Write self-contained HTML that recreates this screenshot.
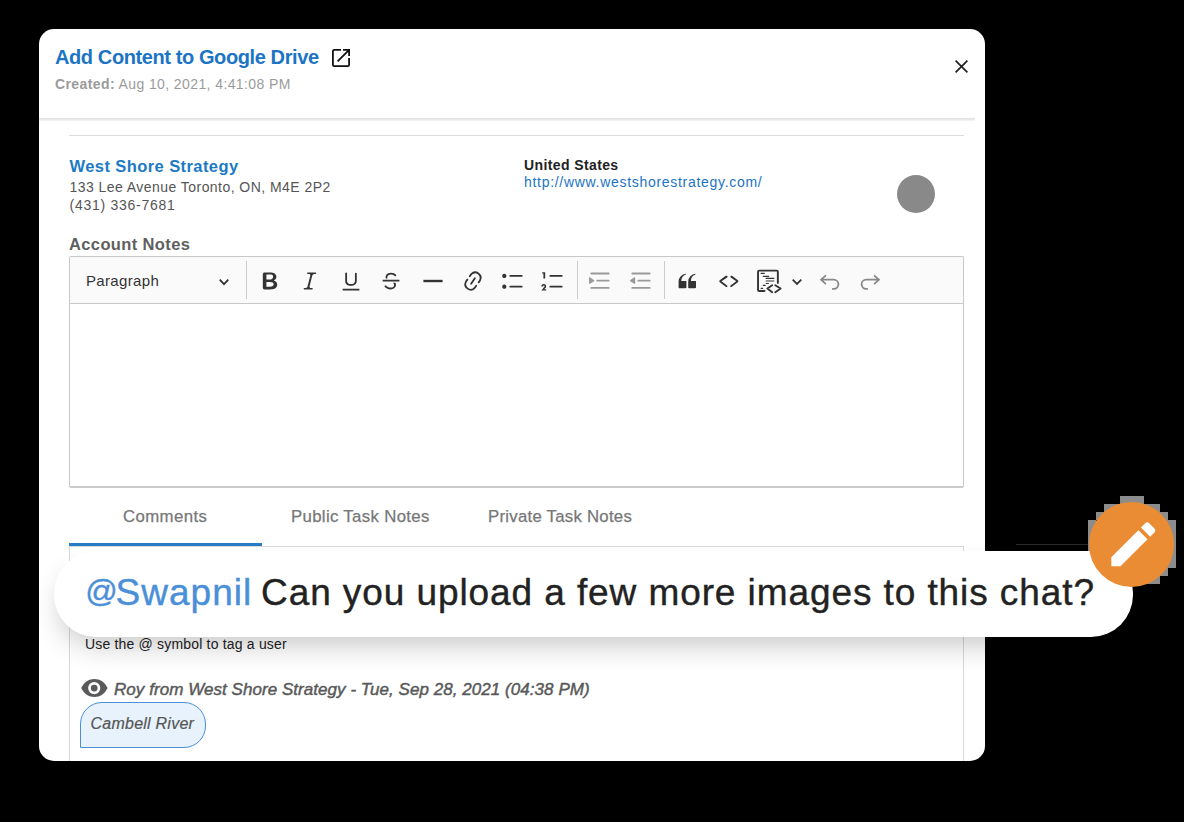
<!DOCTYPE html>
<html><head><meta charset="utf-8">
<style>
*{margin:0;padding:0;box-sizing:border-box}
html,body{width:1184px;height:822px;overflow:hidden;background:#000}
body{font-family:"Liberation Sans",sans-serif;position:relative}
.t{position:absolute;white-space:nowrap;line-height:1}
.a{position:absolute}
#modal{position:absolute;left:0;top:0;width:1184px;height:822px;background:#fff;clip-path:inset(29px 199px 61px 39px round 15px)}
svg{position:absolute;overflow:visible}
</style></head><body>
<div id="modal">
  <div class="t" style="left:55px;top:47.1px;font-size:20px;font-weight:bold;color:#1c74c5;letter-spacing:-0.4px">Add Content to Google Drive</div>
  <svg style="left:331px;top:48px" width="20" height="20" viewBox="0 0 20 20" fill="none" stroke="#111" stroke-width="1.8">
    <path d="M10 1.9H3.2Q1.9 1.9 1.9 3.2V16.8Q1.9 18.1 3.2 18.1H16.8Q18.1 18.1 18.1 16.8V10"/>
    <path d="M12 1.9H18.1V8M18.1 1.9L6.6 13.4"/>
  </svg>
  <div class="t" style="left:55px;top:77.15px;font-size:14px;color:#9b9b9b;letter-spacing:0.4px"><b>Created:</b> Aug 10, 2021, 4:41:08 PM</div>
  <svg style="left:955px;top:59.8px" width="13" height="13" viewBox="0 0 13 13" stroke="#222" stroke-width="1.7"><path d="M0.6 0.6L12.4 12.4M12.4 0.6L0.6 12.4"/></svg>
  <div class="a" style="left:39px;top:118px;width:936px;height:3px;background:linear-gradient(#e3e3e3,#e6e6e6 40%,#f6f6f6)"></div>
  <div class="a" style="left:69px;top:135px;width:895px;height:1px;background:#dcdcdc"></div>

  <div class="t" style="left:69.5px;top:157.8px;font-size:16.5px;font-weight:bold;color:#1c7ac4;letter-spacing:0.42px">West Shore Strategy</div>
  <div class="t" style="left:69.5px;top:179.65px;font-size:14px;color:#555;letter-spacing:0.45px">133 Lee Avenue Toronto, ON, M4E 2P2</div>
  <div class="t" style="left:69.5px;top:198.45px;font-size:14px;color:#555;letter-spacing:0.73px">(431) 336-7681</div>
  <div class="t" style="left:524px;top:157.65px;font-size:14px;font-weight:bold;color:#222;letter-spacing:0.39px">United States</div>
  <div class="t" style="left:524px;top:175.45px;font-size:14px;color:#1c74c5;letter-spacing:0.7px">http://www.westshorestrategy.com/</div>
  <div class="a" style="left:897px;top:174.5px;width:38px;height:38px;border-radius:50%;background:#898989"></div>

  <div class="t" style="left:69px;top:236.4px;font-size:16.5px;font-weight:bold;color:#5f5f5f;letter-spacing:0.37px">Account Notes</div>

  <!-- editor -->
  <div class="a" style="left:69px;top:255.5px;width:895px;height:232px;border:1px solid #c8c8c8;border-bottom:2px solid #cacaca;border-radius:2px;background:#fff"></div>
  <div class="a" style="left:70px;top:257px;width:893px;height:47px;background:#fafafa;border-bottom:1px solid #c8c8c8"></div>
  <div class="t" style="left:86px;top:272.6px;font-size:15px;color:#333;letter-spacing:0.34px">Paragraph</div>
  <svg style="left:219px;top:279px" width="10" height="6.4" viewBox="0 0 10 6.4" fill="none" stroke="#333" stroke-width="1.8"><path d="M0.7 0.7L5 5.2L9.3 0.7"/></svg>
  <div class="a" style="left:246px;top:261px;width:1px;height:38px;background:#ccc"></div>
  <div class="a" style="left:577px;top:261px;width:1px;height:38px;background:#ccc"></div>
  <div class="a" style="left:663.5px;top:261px;width:1px;height:38px;background:#ccc"></div>


  <!-- tabs -->
  <div class="t" style="left:123px;top:508.7px;font-size:16.8px;color:#777;letter-spacing:0.39px;-webkit-text-stroke:0.25px #777">Comments</div>
  <div class="t" style="left:291px;top:508.9px;font-size:16.8px;color:#777;letter-spacing:0.33px;-webkit-text-stroke:0.25px #777">Public Task Notes</div>
  <div class="t" style="left:488px;top:508.9px;font-size:16.8px;color:#777;letter-spacing:0.25px;-webkit-text-stroke:0.25px #777">Private Task Notes</div>
  <div class="a" style="left:69px;top:545.5px;width:895px;height:1.2px;background:#dadada"></div>
  <div class="a" style="left:69px;top:543px;width:193px;height:3px;background:#2a7bc6"></div>
  <div class="a" style="left:69px;top:546px;width:895px;height:260px;border-left:1px solid #d8d8d8;border-right:1px solid #d8d8d8"></div>
  <div class="t" style="left:85px;top:636.75px;font-size:14px;color:#222;letter-spacing:0.185px">Use the @ symbol to tag a user</div>
  <svg style="left:81px;top:678.7px" width="27" height="18" viewBox="0 0 27 18">
    <path fill="#5a5a5a" d="M0.2 9C3.2 3 7.8 0 13.4 0S23.6 3 26.6 9C23.6 15 19 18 13.4 18S3.2 15 0.2 9z"/>
    <circle cx="13.2" cy="9.1" r="6.1" fill="#fff"/>
    <circle cx="13.2" cy="9.1" r="3.4" fill="#5a5a5a"/>
  </svg>
  <div class="t" style="left:114px;top:680.5px;font-size:17px;font-style:italic;color:#595959;letter-spacing:0.05px;-webkit-text-stroke:0.45px #595959">Roy from West Shore Strategy - Tue, Sep 28, 2021 (04:38 PM)</div>
  <div class="a" style="left:80px;top:702px;width:126px;height:45.5px;background:#e7f2fc;border:1px solid #4a8fd8;border-radius:22px 22px 22px 0"></div>
  <div class="t" style="left:90.5px;top:716.1px;font-size:16px;font-style:italic;color:#555;letter-spacing:0.24px;-webkit-text-stroke:0.2px #555">Cambell River</div>
  <!-- toolbar icons (20 viewBox scaled to 24px) -->
  <svg style="left:257.9px;top:268.9px" width="24" height="24" viewBox="0 0 20 20" fill="#333"><path d="M10.187 17H5.773c-.637 0-1.092-.138-1.364-.415-.273-.277-.409-.718-.409-1.323V4.738c0-.617.14-1.062.419-1.332.279-.27.73-.406 1.354-.406h4.68c.69 0 1.288.041 1.793.124.506.083.96.242 1.36.478.341.197.644.447.906.75a3.262 3.262 0 0 1 .808 2.162c0 1.401-.722 2.426-2.167 3.075C15.05 10.175 16 11.315 16 13.01a3.756 3.756 0 0 1-2.296 3.504 6.1 6.1 0 0 1-1.517.377c-.571.073-1.238.11-2 .11zm-.217-6.217H7v4.087h3.069c1.977 0 2.965-.69 2.965-2.072 0-.707-.256-1.22-.768-1.537-.512-.319-1.277-.478-2.296-.478zM7 5.13v3.619h2.606c.709 0 1.258-.066 1.648-.198a1.65 1.65 0 0 0 .886-.759c.303-.48.455-.86.455-1.34 0-.79-.281-1.315-.845-1.576-.369-.171-1.082-.252-2.084-.252H7z"/></svg>

  <svg style="left:297.9px;top:268.9px" width="24" height="24" viewBox="0 0 20 20" fill="#333"><path d="m9.586 14.633.021.004c-.036.335.095.655.393.962.082.083.173.15.274.201h1.474a.6.6 0 1 1 0 1.2H5.304a.6.6 0 0 1 0-1.2h1.15c.474-.07.809-.182 1.005-.334.157-.122.291-.32.404-.597l2.416-9.55a1.053 1.053 0 0 0-.281-.823 1.12 1.12 0 0 0-.442-.296H8.15a.6.6 0 0 1 0-1.2h6.443a.6.6 0 1 1 0 1.2h-1.195c-.376.056-.65.155-.823.296-.215.175-.423.439-.623.79l-2.366 9.347z"/></svg>
  <svg style="left:338.6px;top:268.9px" width="24" height="24" viewBox="0 0 20 20" fill="#333"><path d="M3 18v-1.5h14V18zm2.2-8V3.6c0-.4.4-.6.8-.6.3 0 .7.2.7.6v6.2c0 2 1.3 2.8 3.2 2.8 1.9 0 3.4-.9 3.4-2.9V3.6c0-.3.4-.5.8-.5.3 0 .7.2.7.5V10c0 2.7-2.2 4-4.9 4-2.6 0-4.7-1.2-4.7-4z"/></svg>
  <svg style="left:379.4px;top:268.9px" width="24" height="24" viewBox="0 0 20 20" fill="#333"><path d="M7 16.4c-.8-.4-1.5-.9-2.2-1.5a.6.6 0 0 1-.2-.5l.3-.6h1c1 1.2 2.1 1.7 3.7 1.7 1 0 1.8-.3 2.3-.6.6-.4.6-1.2.6-1.3.2-1.2-.9-2.1-.9-2.1h2.1c.3.7.4 1.2.4 1.7v.8l-.6 1.2c-.6.8-1.1 1-1.6 1.2a6 6 0 0 1-2.4.6c-1 0-1.8-.3-2.5-.6zM6.8 9 6 8.3c-.4-.5-.5-.8-.5-1.6 0-.7.1-1.3.5-1.8.4-.6 1-1 1.6-1.3a6.3 6.3 0 0 1 4.7 0 4 4 0 0 1 1.7 1l.3.7c0 .1.2.4-.2.7-.4.2-.9.1-1 0a3 3 0 0 0-1.2-1c-.4-.2-1-.3-2-.4-.7 0-1.4.2-2 .6-.8.6-1 1.5-1 2s.3.6.4.8h-1.5zM3 10.5V9h14v1.5z"/></svg>
  <svg style="left:420.5px;top:268.9px" width="24" height="24" viewBox="0 0 20 20" fill="#333"><path d="M2 9h16v2H2z"/></svg>
  <svg style="left:461.3px;top:268.9px" width="24" height="24" viewBox="0 0 20 20" fill="#333"><path d="m11.077 15 .991-1.416a.75.75 0 1 1 1.229.86l-1.148 1.64a.748.748 0 0 1-.217.206 5.251 5.251 0 0 1-8.503-5.955.741.741 0 0 1 .12-.274l1.147-1.639a.75.75 0 1 1 1.228.86L4.933 10.7l.006.003a3.75 3.75 0 0 0 6.132 4.294l.006.004zm5.494-5.335a.748.748 0 0 1-.12.274l-1.147 1.639a.75.75 0 1 1-1.228-.86l.86-1.23a3.75 3.75 0 0 0-6.144-4.301l-.86 1.229a.75.75 0 0 1-1.229-.86l1.148-1.64a.748.748 0 0 1 .217-.206 5.251 5.251 0 0 1 8.503 5.955zm-4.563-2.532a.75.75 0 0 1 .184 1.045l-3.155 4.505a.75.75 0 1 1-1.229-.86l3.155-4.506a.75.75 0 0 1 1.045-.184z"/></svg>
  <svg style="left:501px;top:268.9px" width="24" height="24" viewBox="0 0 20 20" fill="#333"><path d="M7 5.75c0 .414.336.75.75.75h9.5a.75.75 0 1 0 0-1.5h-9.5a.75.75 0 0 0-.75.75zm-6 0C1 4.784 1.777 4 2.75 4c.966 0 1.75.777 1.75 1.75 0 .966-.777 1.75-1.75 1.75C1.784 7.5 1 6.723 1 5.75zm6 9c0 .414.336.75.75.75h9.5a.75.75 0 1 0 0-1.5h-9.5a.75.75 0 0 0-.75.75zm-6 0c0-.966.777-1.75 1.75-1.75.966 0 1.75.777 1.75 1.75 0 .966-.777 1.75-1.75 1.75-.966 0-1.75-.777-1.75-1.75z"/></svg>
  <svg style="left:541.4px;top:268.9px" width="24" height="24" viewBox="0 0 20 20" fill="#333"><path d="M7 5.75c0 .414.336.75.75.75h9.5a.75.75 0 1 0 0-1.5h-9.5a.75.75 0 0 0-.75.75zM3.5 3v5H2V3.7H1v-1h2.5V3zM.343 17.857l2.59-3.257H2.92a.6.6 0 1 0-1.04 0H.302a2 2 0 1 1 3.995 0h-.001c-.048.405-.16.734-.333.988-.175.254-.59.692-1.244 1.312H4.3v1h-4l.043-.043zM7 14.75a.75.75 0 0 1 .75-.75h9.5a.75.75 0 1 1 0 1.5h-9.5a.75.75 0 0 1-.75-.75z"/></svg>
  <svg style="left:588.3px;top:269.3px" width="24" height="24" viewBox="0 0 20 20" fill="#999"><path d="M2 3.75c0 .414.336.75.75.75h14.5a.75.75 0 1 0 0-1.5H2.75a.75.75 0 0 0-.75.75zm5 6c0 .414.336.75.75.75h9.5a.75.75 0 1 0 0-1.5h-9.5a.75.75 0 0 0-.75.75zM2.75 16.5h14.5a.75.75 0 1 0 0-1.5H2.75a.75.75 0 1 0 0 1.5zM1.632 6.95 5.02 9.358a.5.5 0 0 1-.013.822L1.62 12.357a.5.5 0 0 1-.77-.42V7.358a.5.5 0 0 1 .782-.409z"/></svg>
  <svg style="left:629.3px;top:269.3px" width="24" height="24" viewBox="0 0 20 20" fill="#999"><path d="M2 3.75c0 .414.336.75.75.75h14.5a.75.75 0 1 0 0-1.5H2.75a.75.75 0 0 0-.75.75zm5 6c0 .414.336.75.75.75h9.5a.75.75 0 1 0 0-1.5h-9.5a.75.75 0 0 0-.75.75zM2.75 16.5h14.5a.75.75 0 1 0 0-1.5H2.75a.75.75 0 1 0 0 1.5zm1.618-9.55L.98 9.358a.5.5 0 0 0 .013.822l3.386 2.177a.5.5 0 0 0 .77-.42V7.358a.5.5 0 0 0-.782-.409z"/></svg>
  <svg style="left:675.3px;top:268.9px" width="24" height="24" viewBox="0 0 20 20" fill="#333"><path d="M3 10.423a6.5 6.5 0 0 1 6.056-6.408l.038.67C6.448 5.423 5.354 7.663 5.22 10H9c.552 0 .5.432.5.986v4.511c0 .554-.448.503-1 .503h-5c-.552 0-.5-.449-.5-1.003v-4.574zm8 0a6.5 6.5 0 0 1 6.056-6.408l.038.67c-2.646.739-3.74 2.979-3.873 5.315H17c.552 0 .5.432.5.986v4.511c0 .554-.448.503-1 .503h-5c-.552 0-.5-.449-.5-1.003v-4.574z"/></svg>
  <svg style="left:716.6px;top:268.9px" width="24" height="24" viewBox="0 0 20 20" fill="#333"><path d="m12.5 5.7 5.2 3.9v1.3l-5.6 4c-.1.2-.3.2-.5.2-.4-.1-.6-.7-.6-1l.3-.4 4.7-3.5L11.5 7l-.2-.2c-.1-.3-.1-.6 0-.8.2-.4.8-.5 1.2-.3zm-5.2 0L2 9.6v1.3l5.6 4c.1.2.3.2.5.2.4-.1.6-.7.6-1l-.3-.4L3.8 10.2 8.5 7l.2-.2c.1-.3.1-.6 0-.8-.2-.4-.8-.5-1.2-.3z"/></svg>
  <svg style="left:752px;top:264.5px" width="36" height="32" viewBox="0 0 36 32" fill="none" stroke="#333" stroke-linecap="round" stroke-linejoin="round">
    <path stroke-width="1.9" d="M12.5 26.05H7.2Q6.05 26.05 6.05 24.9V6.8Q6.05 5.65 7.2 5.65H24.7Q25.85 5.65 25.85 6.8V17.9"/>
    <path stroke-width="1.2" d="M9.1 8.4H12.3M11.3 11.3H16.7M14.2 13.4H21.8M14.2 16H21.8M14.2 18.5H16.4M11.3 20.4H13.2M9.1 23.3H10.7"/>
    <path stroke-width="1.9" d="M20.2 20.2L15.4 23.5L20.2 27.2M23.3 20.2L28.6 23.5L23.3 27.2"/>
  </svg>
  <svg style="left:791.8px;top:279px" width="10" height="6" viewBox="0 0 10 6" fill="none" stroke="#333" stroke-width="1.8"><path d="M0.7 0.7L5 4.9L9.3 0.7"/></svg>
  <svg style="left:815px;top:266.5px" width="70" height="30" viewBox="0 0 70 30" fill="none" stroke="#888" stroke-width="1.8" stroke-linecap="round" stroke-linejoin="round">
    <path d="M10.4 8.8L6 12.7L10.4 16.6M6 12.7H18.8A4.6 4.6 0 0 1 18.8 21.9H17.8"/>
    <path d="M59.6 8.8L64 12.7L59.6 16.6M64 12.7H51.2A4.6 4.6 0 0 0 51.2 21.9H52.2"/>
  </svg>
</div>

<!-- callout pill -->
<div class="a" style="left:1016px;top:544px;width:74px;height:1px;background:#2b2b2b"></div>
<div id="halo"><div class="a" style="left:1120px;top:496px;width:8px;height:8px;background:#8c8c8c"></div><div class="a" style="left:1128px;top:496px;width:8px;height:8px;background:#8c8c8c"></div><div class="a" style="left:1136px;top:496px;width:8px;height:8px;background:#8c8c8c"></div><div class="a" style="left:1104px;top:504px;width:8px;height:8px;background:#8c8c8c"></div><div class="a" style="left:1112px;top:504px;width:8px;height:8px;background:#8c8c8c"></div><div class="a" style="left:1144px;top:504px;width:8px;height:8px;background:#8c8c8c"></div><div class="a" style="left:1152px;top:504px;width:8px;height:8px;background:#8c8c8c"></div><div class="a" style="left:1096px;top:512px;width:8px;height:8px;background:#8c8c8c"></div><div class="a" style="left:1152px;top:512px;width:8px;height:8px;background:#8c8c8c"></div><div class="a" style="left:1160px;top:512px;width:8px;height:8px;background:#8c8c8c"></div><div class="a" style="left:1088px;top:520px;width:8px;height:8px;background:#8c8c8c"></div><div class="a" style="left:1160px;top:520px;width:8px;height:8px;background:#8c8c8c"></div><div class="a" style="left:1168px;top:520px;width:8px;height:8px;background:#8c8c8c"></div><div class="a" style="left:1088px;top:528px;width:8px;height:8px;background:#8c8c8c"></div><div class="a" style="left:1168px;top:528px;width:8px;height:8px;background:#8c8c8c"></div><div class="a" style="left:1088px;top:536px;width:8px;height:8px;background:#8c8c8c"></div><div class="a" style="left:1168px;top:536px;width:8px;height:8px;background:#8c8c8c"></div><div class="a" style="left:1088px;top:544px;width:8px;height:8px;background:#8c8c8c"></div><div class="a" style="left:1168px;top:544px;width:8px;height:8px;background:#8c8c8c"></div><div class="a" style="left:1168px;top:552px;width:8px;height:8px;background:#8c8c8c"></div><div class="a" style="left:1160px;top:560px;width:8px;height:8px;background:#8c8c8c"></div><div class="a" style="left:1168px;top:560px;width:8px;height:8px;background:#8c8c8c"></div><div class="a" style="left:1160px;top:568px;width:8px;height:8px;background:#8c8c8c"></div><div class="a" style="left:1144px;top:576px;width:8px;height:8px;background:#8c8c8c"></div><div class="a" style="left:1152px;top:576px;width:8px;height:8px;background:#8c8c8c"></div></div>
<div class="a" style="left:54px;top:551px;width:1079px;height:85.5px;background:#fff;border-radius:42px;box-shadow:0 14px 28px -6px rgba(0,0,0,.22)"></div>
<div class="t" style="left:85.3px;top:574.5px;font-size:32px;color:#4a8fd8;-webkit-text-stroke:0.4px #4a8fd8">@</div>
<div class="t" style="left:115.5px;top:574.4px;font-size:37px;color:#4a8fd8;letter-spacing:1.04px;-webkit-text-stroke:0.4px #4a8fd8">Swapnil</div>
<div class="t" style="left:261px;top:574.4px;font-size:37px;color:#222;letter-spacing:0.915px;-webkit-text-stroke:0.4px #222">Can you upload a few more images to this chat?</div>
<div class="a" style="left:1088.5px;top:502px;width:85.5px;height:85px;border-radius:50%;background:#e98c33"></div>
<svg style="left:1103.7px;top:515.4px" width="58.7" height="58.7" viewBox="0 0 24 24" fill="#fff"><path d="M3 17.25V21h3.75L17.81 9.94l-3.75-3.75L3 17.25zM20.71 7.04c.39-.39.39-1.02 0-1.41l-2.34-2.34c-.39-.39-1.02-.39-1.41 0l-1.83 1.83 3.75 3.75 1.83-1.83z"/></svg>
</body></html>
